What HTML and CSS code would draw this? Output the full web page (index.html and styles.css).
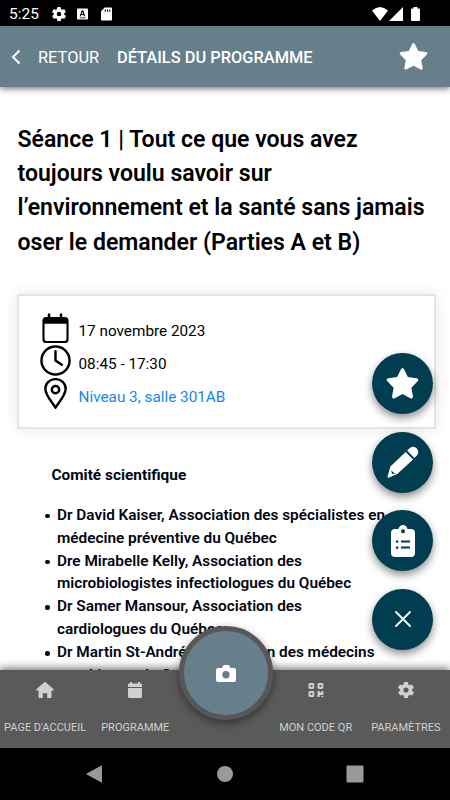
FILE: index.html
```
<!DOCTYPE html>
<html lang="fr">
<head>
  <meta charset="UTF-8">
  <meta name="viewport" content="width=device-width, initial-scale=1.0">
  <title>Détails du programme</title>
  <link rel="stylesheet" href="styles.css">
</head>
<body>
  <div class="statusbar">
    <span class="time">5:25</span>
    <svg class="s-gear" viewBox="0 0 24 24"><use href="#gear"/></svg>
    <svg class="s-a" viewBox="0 0 12 12"><path fill-rule="evenodd" d="M1 0h10a1 1 0 0 1 1 1v10a1 1 0 0 1-1 1H1a1 1 0 0 1-1-1V1a1 1 0 0 1 1-1zm4.200 2L3 8.500h1.300l.4-1.400h2.500l.4 1.400H9L6.700 2zM6 3.500L6.800 6H5.100zM3 9.700v.8h6.500v-.8z"/></svg>
    <svg class="s-sd" viewBox="0 0 12 14"><path fill-rule="evenodd" d="M4 0h7a1 1 0 0 1 1 1v12a1 1 0 0 1-1 1H1a1 1 0 0 1-1-1V4zm0 2v2.500h1.200V2zm2.500 0v2.500h1.200V2zM9 2v2.500h1.200V2z"/></svg>
    <span class="spacer"></span>
    <svg class="s-wifi" viewBox="0 0 16 14"><path d="M0 3.500Q8-3.500 16 3.500L8 14z"/></svg>
    <svg class="s-signal" viewBox="0 0 14 14"><path d="M14 0v14H0z"/></svg>
    <svg class="s-battery" viewBox="0 0 9 14"><path d="M2.500 0h4v1.500H8a1 1 0 0 1 1 1V13a1 1 0 0 1-1 1H1a1 1 0 0 1-1-1V2.500a1 1 0 0 1 1-1h1.500z"/></svg>
  </div>

  <header class="header">
    <svg class="back" viewBox="0 0 10 16"><path d="M8.500 1.500L2 8l6.500 6.500"/></svg>
    <span class="retour">RETOUR</span>
    <h1>DÉTAILS DU PROGRAMME</h1>
    <svg class="star" viewBox="0 0 32 32"><use href="#star"/></svg>
  </header>

  <main class="content">
    <h2>Séance 1 | Tout ce que vous avez toujours voulu savoir sur l’environnement et la santé sans jamais oser le demander (Parties A et B)</h2>

    <div class="card">
      <div class="row">
        <svg viewBox="0 0 32 32"><path fill-rule="evenodd" d="M8 1.500a1.300 1.300 0 0 1 2.600 0V4h9.800V1.500a1.300 1.300 0 0 1 2.600 0V4h2.500a4 4 0 0 1 4 4v19a4 4 0 0 1-4 4h-19a4 4 0 0 1-4-4V8a4 4 0 0 1 4-4H8zM4.700 11v15.800a2 2 0 0 0 2 2h18.600a2 2 0 0 0 2-2V11z"/></svg>
        <span>17 novembre 2023</span>
      </div>
      <div class="row">
        <svg class="line" viewBox="0 0 32 32"><circle cx="16" cy="16" r="14.500"/><path d="M16 6.500V16l6.500 4.500"/></svg>
        <span>08:45 - 17:30</span>
      </div>
      <div class="row">
        <svg class="line" viewBox="0 0 32 32"><path d="M16 30.500C12 24.500 5.500 17.500 5.500 11a10.500 9.800 0 0 1 21 0C26.500 17.500 20 24.500 16 30.500z"/><circle cx="16" cy="12" r="3.800"/></svg>
        <a>Niveau 3, salle 301AB</a>
      </div>
    </div>

    <div class="details">
      <h3>Comité scientifique</h3>
      <ul>
        <li>Dr David Kaiser, Association des spécialistes en médecine préventive du Québec</li>
        <li>Dre Mirabelle Kelly, Association des microbiologistes infectiologues du Québec</li>
        <li>Dr Samer Mansour, Association des cardiologues du Québec</li>
        <li>Dr Martin St-André, Association des médecins psychiatres du Québec</li>
      </ul>
    </div>
  </main>

  <div class="fabs">
    <button class="fab"><svg class="i-star" viewBox="0 0 32 32"><use href="#star"/></svg></button>
    <button class="fab"><svg class="i-pencil" viewBox="0 0 32 32"><path fill-rule="evenodd" d="M18.600 5.900l7.500 7.500L10.500 27.700 1.800 31.700Q.3 32 .6 30.200L3.400 20.500zM4.200 24.200l.9 3.800 3.800-.6-2.500-.9z"/><path d="M20.100 4.600l2.800-2.500c2.400-2 5-1.500 6.800.3s2.300 4.400.3 6.800l-2.600 2.800z"/></svg></button>
    <button class="fab"><svg class="i-list" viewBox="0 0 24 32"><path fill-rule="evenodd" d="M4 4h3.500C8 1.500 10 0 12 0s4 1.500 4.500 4H20a4 4 0 0 1 4 4v20a4 4 0 0 1-4 4H4a4 4 0 0 1-4-4V8a4 4 0 0 1 4-4zm8 .2a2 2 0 1 0 0 4 2 2 0 0 0 0-4zM5 15.500v2.300h2.300v-2.300zm5 0v2h9v-2zM5 21.500v2.300h2.300v-2.300zm5 0v2h9v-2z"/></svg></button>
    <button class="fab"><svg class="i-close" viewBox="0 0 16 16"><path d="M1 1l14 14M15 1L1 15"/></svg></button>
  </div>

  <nav class="tabs">
    <div class="tab">
      <svg viewBox="0 0 18 16"><path d="M8.300.3a1 1 0 0 1 1.400 0L17.600 7.300q.7.900-.3 1.100H15.500V15a1 1 0 0 1-1 1h-3.300v-4.700H6.800V16H3.500a1 1 0 0 1-1-1V8.400H.7q-1-.2-.3-1.100z"/></svg>
      <span>PAGE D'ACCUEIL</span>
    </div>
    <div class="tab">
      <svg viewBox="0 0 18 16"><path d="M4 0h2v1.500h6V0h2v1.500h1q1 0 1 1V5H2V2.500q0-1 1-1h1zM2 6h14v8.500q0 1.500-1.500 1.500h-11Q2 16 2 14.500z"/></svg>
      <span>PROGRAMME</span>
    </div>
    <div class="tab middle"></div>
    <div class="tab">
      <svg viewBox="0 0 18 16"><path fill-rule="evenodd" d="M3 1h3q1.300 0 1.300 1.300v3Q7.300 6.900 6 6.900H3Q1.500 6.900 1.500 5.300v-3Q1.500 1 3 1zm.5 2v2h2V3zM12 1h3q1.300 0 1.300 1.300v3q0 1.600-1.300 1.600h-3q-1.500 0-1.500-1.600v-3Q10.500 1 12 1zm.5 2v2h2V3zM3 9.100h3q1.300 0 1.300 1.300v3Q7.300 15 6 15H3q-1.500 0-1.500-1.600v-3Q1.500 9.100 3 9.100zm.5 2v2h2v-2zM10.500 9.100h2.200v1.400h1.600V9.100h2v3.900h-3.600v2h-2.200zM14.300 13.900h2V15h-2z"/></svg>
      <span>MON CODE QR</span>
    </div>
    <div class="tab">
      <svg viewBox="0 0 16 16"><use href="#gear"/></svg>
      <span>PARAMÈTRES</span>
    </div>
    <button class="camera">
      <svg viewBox="0 0 20 17"><path fill-rule="evenodd" d="M2 3h4l1-2.200Q7.400 0 8.200 0h4q.8 0 1.200.8L14.400 3H18q2 0 2 2v10q0 2-2 2H2q-2 0-2-2V5q0-2 2-2zm8 3a3.700 3.700 0 1 0 0 7.400A3.700 3.700 0 0 0 10 6z"/></svg>
    </button>
  </nav>

  <div class="navbar">
    <svg viewBox="0 0 18 18"><path d="M16 .3v17.400L.7 9.400q-.5-.4 0-.8z"/></svg>
    <svg viewBox="0 0 18 18"><circle cx="9" cy="9" r="8"/></svg>
    <svg viewBox="0 0 18 18"><rect x=".5" y=".5" width="17" height="17" rx="1"/></svg>
  </div>

  <!-- shared icons -->
  <svg class="defs">
    <symbol id="star" viewBox="0 0 32 32"><path d="M14.400 2.500q1.600-3 3.200 0l3.600 7.300 8.300 1.200q2.900.7 1.200 2.900L24.600 20l1.500 8.300q.2 3-2.600 1.900L16 26.300l-7.500 3.900q-2.800 1.100-2.600-1.900L7.400 20l-6.100-6.100Q-.4 11.700 2.500 11l8.300-1.200z"/></symbol>
    <symbol id="gear" viewBox="2 2 20 20"><path fill-rule="evenodd" d="M19.400 13c0-.3.100-.6.100-1s0-.7-.1-1l2.100-1.600c.2-.2.300-.5.100-.7l-2-3.400c-.1-.2-.4-.3-.6-.2l-2.500 1c-.5-.4-1.100-.7-1.700-1l-.4-2.600c0-.3-.2-.5-.5-.5h-4c-.3 0-.5.200-.5.400l-.4 2.700c-.6.200-1.100.6-1.700 1l-2.500-1c-.2-.1-.5 0-.6.200l-2 3.400c-.1.200-.1.500.1.700L4.600 11c0 .3-.1.700-.1 1s0 .7.100 1l-2.100 1.600c-.2.200-.3.500-.1.700l2 3.400c.1.200.4.300.6.200l2.500-1c.5.400 1.100.7 1.700 1l.4 2.600c0 .3.200.5.500.5h4c.2 0 .5-.2.500-.4l.4-2.700c.6-.2 1.100-.6 1.700-1l2.500 1c.2.100.5 0 .6-.2l2-3.400c.1-.2.100-.5-.1-.7zM12 15.200a3.200 3.200 0 1 1 0-6.400 3.200 3.200 0 0 1 0 6.400z"/></symbol>
  </svg>
</body>
</html>
```

FILE: styles.css
```
* {
  box-sizing: border-box;
}
body {
  margin: 0;
  height: 800px;
  display: flex;
  flex-direction: column;
  overflow: hidden;
  position: relative;
  font-family: Roboto, sans-serif;
  background: #fff;
  color: #000;
}
svg {
  display: block;
  flex: none;
  fill: currentColor;
}
.defs {
  position: absolute;
  width: 0;
  height: 0;
}
.statusbar {
  flex: none;
  display: flex;
  align-items: center;
  height: 26px;
  padding: 1px 30px 0 9px;
  background: #000;
  color: #fff;
}
.time {
  width: 43px;
  font-size: 15.500px;
}
.s-gear {
  width: 14px;
  height: 14px;
}
.s-a {
  width: 11px;
  height: 12px;
  margin-left: 11px;
}
.s-sd {
  width: 11px;
  height: 14px;
  margin-left: 13px;
}
.spacer {
  flex: 1;
}
.s-wifi {
  width: 16px;
  height: 14px;
}
.s-signal {
  width: 14px;
  height: 14px;
  margin-left: 1px;
}
.s-battery {
  width: 9px;
  height: 14px;
  margin-left: 8px;
}
.header {
  flex: none;
  display: flex;
  align-items: center;
  height: 61px;
  padding: 0 22px 0 11px;
  background: #667f8b;
  color: #fff;
  box-shadow: 0 2px 6px rgba(0, 0, 0, 0.5);
  z-index: 1;
}
.back {
  width: 10px;
  height: 16px;
  fill: none;
  stroke: #fff;
  stroke-width: 2;
}
.retour {
  width: 79px;
  margin-left: 17px;
  padding-top: 1px;
  font-size: 16.400px;
}
h1 {
  flex: 1;
  margin: 0;
  padding-top: 1px;
  font-size: 16.400px;
  font-weight: 500;
}
.star {
  width: 29px;
  height: 29px;
}
.content {
  flex: 1;
  min-height: 0;
  overflow: hidden;
  padding: 36px 14px 0 17px;
}
h2 {
  margin: 0 0 0 0.500px;
  font-size: 23.050px;
  font-weight: 600;
  line-height: 34.200px;
}
.card {
  height: 135px;
  margin-top: 34px;
  padding: 16px 21px;
  border: 2px solid #e4e4e4;
  box-shadow: 0 0 14px rgba(0, 0, 0, 0.1);
}
.row {
  display: flex;
  align-items: center;
  gap: 7.500px;
  height: 32.700px;
  font-size: 15.300px;
}
.row svg {
  width: 31px;
  height: 31px;
}
.row span, .row a {
  padding-top: 6px;
}
.row a {
  color: #1487f0;
}
.row .line {
  fill: none;
  stroke: #000;
  stroke-width: 2.500;
  stroke-linecap: round;
}
.details {
  width: 336px;
  margin: 35px 0 0 34px;
  color: #000613;
  font-size: 15.350px;
  line-height: 22.900px;
}
h3 {
  margin: 0 0 17px 0.500px;
  font-size: 15.400px;
  font-weight: 700;
}
ul {
  margin: 0;
  padding-left: 6px;
  font-weight: 600;
  list-style: none;
}
li::before {
  content: "";
  float: left;
  width: 4.500px;
  height: 4.500px;
  margin: 10px 0 0 -12px;
  border-radius: 50%;
  background: currentColor;
}
.fabs {
  position: absolute;
  top: 353px;
  right: 17px;
  display: grid;
  gap: 17.600px;
}
.fab {
  display: flex;
  align-items: center;
  justify-content: center;
  width: 61px;
  height: 61px;
  padding: 0;
  border: none;
  border-radius: 50%;
  background: #013d50;
  color: #fff;
  box-shadow: 0 4px 9px rgba(0, 0, 0, 0.45);
}
.i-star {
  width: 33px;
  height: 33px;
}
.i-pencil {
  width: 32px;
  height: 32px;
}
.i-list {
  width: 24px;
  height: 32px;
}
.i-close {
  width: 16px;
  height: 16px;
  stroke: #fff;
  stroke-width: 1.800;
  stroke-linecap: round;
}
.tabs {
  position: relative;
  flex: none;
  display: grid;
  grid-template-columns: repeat(5, 90.200px);
  height: 78px;
  background: #5a5a5a;
  color: #d0d0d0;
  box-shadow: 0 -2px 8px rgba(0, 0, 0, 0.55);
}
.tab {
  display: flex;
  flex-direction: column;
  align-items: center;
  padding-top: 12px;
  gap: 23px;
  font-size: 11px;
  line-height: 14px;
  white-space: nowrap;
}
.tab svg {
  width: 18px;
  height: 16px;
}
.camera {
  position: absolute;
  left: 178.500px;
  top: -44px;
  display: flex;
  align-items: center;
  justify-content: center;
  width: 94px;
  height: 94px;
  padding: 0;
  border: 5px solid #575757;
  border-radius: 50%;
  background: #667f8b;
  color: #fff;
  box-shadow: 0 3px 9px rgba(0, 0, 0, 0.45);
}
.camera svg {
  width: 20px;
  height: 17px;
}
.navbar {
  flex: none;
  display: flex;
  align-items: center;
  justify-content: space-between;
  height: 52px;
  padding: 0 86px;
  background: #000;
  color: #999;
  z-index: 1;
}
.navbar svg {
  width: 18px;
  height: 18px;
}
```
